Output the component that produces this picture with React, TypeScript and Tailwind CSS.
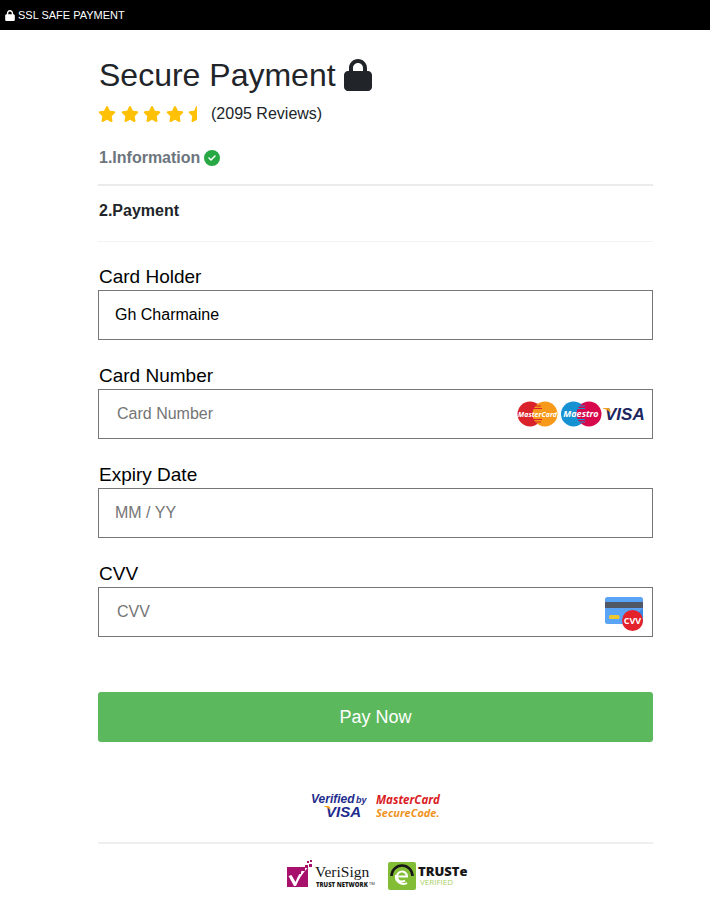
import type { ReactNode } from "react";
import { FaCircleCheck, FaLock, FaStar, FaStarHalf } from "react-icons/fa6";

function CardBrands() {
  return (
    <svg width="128" height="28" viewBox="0 0 128 28" role="img" aria-label="MasterCard, Maestro, Visa">
      <circle cx="14" cy="14" r="12.5" fill="#d9222a" />
      <circle cx="29" cy="14" r="12.5" fill="#f79a1c" />
      <path d="M18 6h7M17 8.500h9M17 19.500h9M18 22h7" stroke="#d9222a" strokeWidth="1" />
      <text x="21.500" y="17" textAnchor="middle" fill="#fff" fontFamily="'Noto Sans', sans-serif" fontSize="7" fontStyle="italic" fontWeight="700">MasterCard</text>
      <circle cx="57.500" cy="14" r="12.500" fill="#1692d2" />
      <circle cx="73" cy="14" r="12.500" fill="#d7094c" />
      <path d="M61 6h8M60 8.500h9M60 19.500h9M61 22h8" stroke="#1692d2" strokeWidth="1" />
      <text x="65" y="17" textAnchor="middle" fill="#fff" fontFamily="'Open Sans', sans-serif" fontSize="9" fontStyle="italic" fontWeight="700">Maestro</text>
      <text x="89" y="20" fill="#20265f" fontFamily="'Liberation Sans', sans-serif" fontSize="17" fontStyle="italic" fontWeight="700">VISA</text>
      <path d="M87 8h5q1.500 0 2 1.500l1 4Q92 9.500 87 8.500z" fill="#f0a020" />
    </svg>
  );
}

function CvvCard() {
  return (
    <svg width="40" height="40" viewBox="0 -4 40 40" role="img" aria-label="Card security code">
      <rect x="1" y="1" width="38" height="27" rx="2.500" fill="#5aa4f8" />
      <path d="M39 12v14H25z" fill="#3d87e4" />
      <rect x="1" y="6" width="38" height="6" fill="#4f5864" />
      <rect x="5" y="19" width="10.500" height="4" rx="1.500" fill="#edc72f" />
      <circle cx="28.500" cy="24.500" r="10.500" fill="#e3222b" />
      <text x="28.500" y="28" textAnchor="middle" fill="#fff" fontFamily="'Open Sans', sans-serif" fontSize="9" fontWeight="700">CVV</text>
    </svg>
  );
}

function VerifiedByVisa() {
  return (
    <svg width="58" height="32" viewBox="0 0 58 32" role="img" aria-label="Verified by Visa">
      <g fill="#1e2c8c" fontFamily="'Liberation Sans', sans-serif" fontStyle="italic" fontWeight="700">
        <text x="1" y="13" fontSize="12">Verified</text>
        <text x="46" y="13" fontSize="9">by</text>
        <text x="16" y="27" fontSize="15">VISA</text>
      </g>
      <path d="M14 16h4q1.500 0 2 1.500l.5 3Q18 17 14 16.500z" fill="#f4a21c" />
    </svg>
  );
}

function SecureCode() {
  return (
    <svg width="66" height="32" viewBox="0 0 66 32" role="img" aria-label="MasterCard SecureCode">
      <g fontFamily="'Open Sans', sans-serif" fontStyle="italic" fontWeight="700">
        <text x="0" y="14" fill="#db1c24" fontSize="11.500">MasterCard</text>
        <text x="0" y="27" fill="#ef931c" fontSize="11">SecureCode.</text>
      </g>
    </svg>
  );
}

function VeriSign() {
  return (
    <svg width="90" height="32" viewBox="0 0 90 32" role="img" aria-label="VeriSign Trust Network">
      <rect x="1" y="8" width="21" height="20" fill="#a7106b" />
      <path d="M2.500 17l3-1 4 7Q13 13 20 8l1.500 1Q14 17 10 27H8z" fill="#fff" />
      <path d="M16 9h3v3h-3zM19 6h3v3h-3zM21 2h2v2h-2zM24 1h2v2h-2zM23 5h3v3h-3zM13 13h2v2h-2z" fill="#a7106b" />
      <text x="29" y="18" fill="#171717" fontFamily="'Liberation Serif', serif" fontSize="15.500">VeriSign</text>
      <text x="30" y="28" fill="#171717" fontFamily="'Open Sans', sans-serif" fontSize="6" fontWeight="800">TRUST NETWORK</text>
      <text x="83" y="26" fill="#171717" fontFamily="'Open Sans', sans-serif" fontSize="4">TM</text>
    </svg>
  );
}

function Truste() {
  return (
    <svg width="82" height="32" viewBox="0 0 82 32" role="img" aria-label="TRUSTe Verified">
      <rect x="0" y="3" width="28" height="28" rx="2" fill="#83bd35" />
      <path d="M3.500 17a10.500 10.500 0 0 1 21 0" fill="none" stroke="#171717" strokeWidth="2.500" />
      <path d="M10 17.500h9a5 5 0 1 0-2 4M8 16a7.500 7.500 0 0 0 11 8" fill="none" stroke="#fff" strokeWidth="2" />
      <text x="30" y="17" fill="#171717" fontFamily="'Open Sans', sans-serif" fontSize="13" fontWeight="800">TRUSTe</text>
      <text x="32" y="26" fill="#a9cf65" fontFamily="'Open Sans', sans-serif" fontSize="8">VERIFIED</text>
    </svg>
  );
}

type FieldProps = {
  id: string;
  label: string;
  placeholder?: string;
  defaultValue?: string;
  children?: ReactNode;
};

function Field({ id, label, placeholder, defaultValue, children }: FieldProps) {
  return (
    <div>
      <label htmlFor={id} className="block pl-px text-[19px] leading-[27px] text-black">
        {label}
      </label>
      <div className="flex h-[50px] items-center border border-[#767676] pr-2 focus-within:border-blue-600">
        <input
          id={id}
          type="text"
          placeholder={placeholder}
          defaultValue={defaultValue}
          className={`h-full min-w-0 flex-1 bg-transparent text-base text-black outline-none placeholder:text-[#757575] ${
            children ? "pl-[18px]" : "pl-4"
          }`}
        />
        {children}
      </div>
    </div>
  );
}

export default function App() {
  return (
    <div className="min-h-screen bg-white font-['Liberation_Sans',Arial,sans-serif] text-[#212529]">
      <header className="flex h-[30px] items-center gap-[3px] bg-black pl-[5px] text-[11px] text-white">
        <FaLock className="h-[11px] w-[10px]" />
        <span>SSL SAFE PAYMENT</span>
      </header>

      <main className="pt-[26px] pr-[57px] pl-[98px]">
        <h1 className="flex items-center gap-2 pl-px text-[32px] leading-[38px]">
          Secure Payment
          <FaLock className="h-8 w-7" />
        </h1>

        <div className="mt-2 flex items-center">
          <div className="flex w-[108px] justify-between" role="img" aria-label="4.5 out of 5 stars">
            <FaStar className="h-[18px] w-[18px] text-[#ffc107]" />
            <FaStar className="h-[18px] w-[18px] text-[#ffc107]" />
            <FaStar className="h-[18px] w-[18px] text-[#ffc107]" />
            <FaStar className="h-[18px] w-[18px] text-[#ffc107]" />
            <FaStarHalf className="h-[18px] w-[18px] text-[#ffc107]" />
          </div>
          <span className="ml-[5px] text-base">(2095 Reviews)</span>
        </div>

        <div className="mt-5 flex items-center gap-1 border-b-2 border-[#ebebeb] pb-[14px] pl-px font-bold text-[#6c757d]">
          1.Information
          <FaCircleCheck className="size-4 text-[#28a745]" />
        </div>
        <div className="border-b border-[#f3f3f3] pt-[13px] pb-[18px] pl-px font-bold">2.Payment</div>

        <form className="mt-[21px]" onSubmit={(e) => e.preventDefault()}>
          <div className="flex flex-col gap-[22px]">
            <Field id="holder" label="Card Holder" defaultValue="Gh Charmaine" />
            <Field id="number" label="Card Number" placeholder="Card Number">
              <CardBrands />
            </Field>
            <Field id="expiry" label="Expiry Date" placeholder="MM / YY" />
            <Field id="cvv" label="CVV" placeholder="CVV">
              <CvvCard />
            </Field>
          </div>
          <button type="submit" className="mt-[55px] h-[50px] w-full rounded-[3px] bg-[#5cb85c] text-lg text-white">
            Pay Now
          </button>
        </form>

        <div className="mt-12 flex justify-center gap-2 border-b-2 border-[#efefef] pb-5">
          <VerifiedByVisa />
          <SecureCode />
        </div>
        <div className="mt-[15px] flex justify-center gap-3 pl-1">
          <VeriSign />
          <Truste />
        </div>
      </main>
    </div>
  );
}
